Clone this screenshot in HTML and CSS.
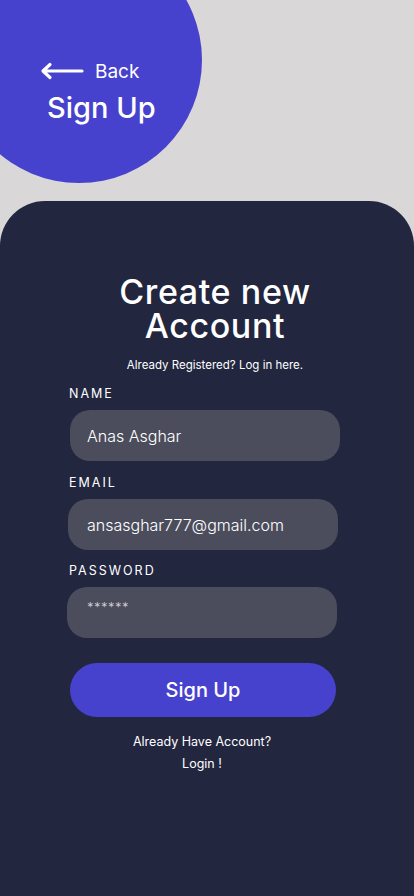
FILE: index.html
```html
<!DOCTYPE html>
<html>
<head>
<meta charset="utf-8">
<link rel="stylesheet" href="styles.css">
</head>
<body>
<div class="page">
  <div class="hero">
    <div class="back">
      <svg class="back-icon" width="44" height="18" viewBox="0 0 44 18"><path d="M42 9H4M10 2.5L3 9l7 6.5" fill="none" stroke="#fff" stroke-width="3.2" stroke-linecap="round" stroke-linejoin="round"/></svg>
      <span class="back-text">Back</span>
    </div>
    <div class="hero-title">Sign Up</div>
  </div>
  <div class="card">
    <h1 class="title"><span class="title-line">Create new</span><span class="title-line">Account</span></h1>
    <p class="subtitle">Already Registered? Log in here.</p>
    <div class="form">
      <div class="field">
        <div class="label">NAME</div>
        <div class="input">Anas Asghar</div>
      </div>
      <div class="field field-email">
        <div class="label">EMAIL</div>
        <div class="input">ansasghar777@gmail.com</div>
      </div>
      <div class="field field-pass">
        <div class="label">PASSWORD</div>
        <div class="input input-pass">******</div>
      </div>
      <div class="button">Sign Up</div>
      <div class="footer">
        <div>Already Have Account?</div>
        <div>Login !</div>
      </div>
    </div>
  </div>
</div>
</body>
</html>
```
FILE: styles.css
```css
html, body {
  margin: 0;
  padding: 0;
}
body {
  background: #d9d7d8;
  font-family: Inter, "Noto Sans", sans-serif;
  color: #fff;
}
.page {
  width: 414px;
  height: 896px;
  overflow: hidden;
  display: flex;
  flex-direction: column;
}
.hero {
  flex: none;
  width: 246px;
  height: 246px;
  border-radius: 50%;
  background: #4742cd;
  margin: -63px 0 0 -44px;
  padding: 121px 0 0 84px;
  box-sizing: border-box;
}
.back {
  display: flex;
  align-items: center;
  gap: 11px;
  height: 26px;
}
.back-icon {
  display: block;
}
.back-text {
  font-size: 19px;
  font-weight: 400;
}
.hero-title {
  margin: 7px 0 0 7px;
  font-size: 29px;
  line-height: 34px;
  font-weight: 500;
}
.card {
  flex: 1;
  margin-top: 18px;
  background: #22263f;
  border-radius: 45px 45px 0 0;
  padding-top: 74px;
  box-sizing: border-box;
}
.title {
  margin: 0 0 0 16px;
  text-align: center;
  font-size: 34px;
  line-height: 34px;
  letter-spacing: 0.6px;
  font-weight: 500;
}
.title-line {
  display: block;
}
.subtitle {
  margin: 15px 0 0 16px;
  text-align: center;
  font-size: 11.5px;
  line-height: 14px;
}
.form {
  margin-left: 70px;
  width: 270px;
  padding-top: 14px;
}
.field {
  width: 270px;
}
.label {
  font-size: 12.5px;
  letter-spacing: 2px;
  line-height: 15px;
  margin-left: -1px;
}
.input {
  margin-top: 9px;
  height: 51px;
  border-radius: 20px;
  background: #4b4d5c;
  display: flex;
  align-items: center;
  padding-left: 17px;
  font-size: 16px;
  font-weight: 300;
}
.field-email {
  margin-top: 14px;
  margin-left: -2px;
}
.field-email .label { margin-left: 1px; }
.field-email .input { padding-left: 19px; }
.field-pass {
  margin-top: 13px;
  margin-left: -3px;
}
.field-pass .label { margin-left: 2px; }
.input-pass {
  align-items: flex-start;
  padding-top: 12px;
  padding-left: 20px;
  box-sizing: border-box;
  font-size: 13px;
  letter-spacing: 0.5px;
  color: #d8d8dc;
}
.button {
  margin-top: 25px;
  width: 266px;
  height: 54px;
  border-radius: 27px;
  background: #4742cd;
  display: flex;
  align-items: center;
  justify-content: center;
  font-size: 20px;
  font-weight: 500;
}
.footer {
  margin-top: 14px;
  width: 264px;
  text-align: center;
  font-size: 12.5px;
  line-height: 22px;
}
```
